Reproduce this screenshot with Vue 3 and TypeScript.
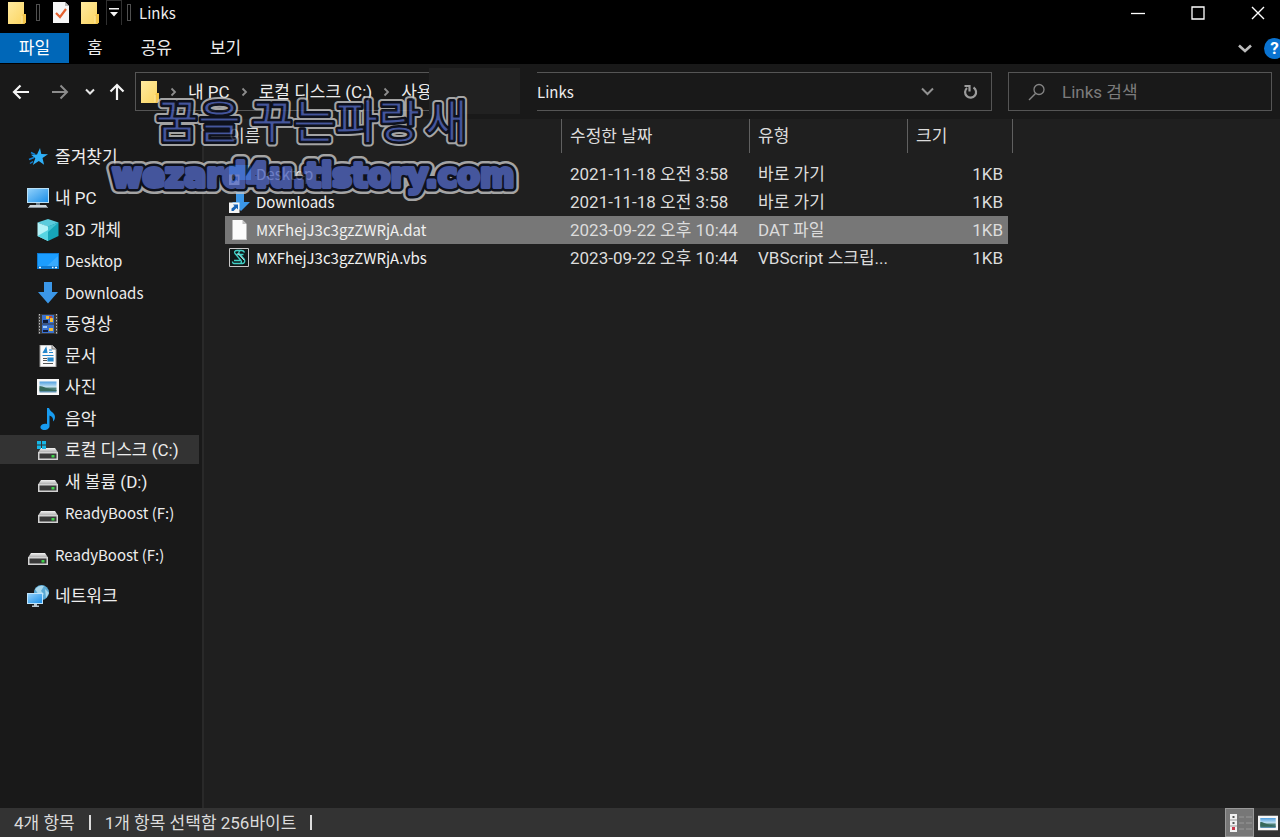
<script setup lang="ts">
import { ref } from 'vue'

interface TreeItem { id: string; icon: string; label: string }
interface FileItem { name: string; icon: string; date: string; type: string; size: string }

const tabs: string[] = ['파일', '홈', '공유', '보기']
const crumbs: string[] = ['내 PC', '로컬 디스크 (C:)', '사용']
const columns: string[] = ['이름', '수정한 날짜', '유형', '크기']

const children: TreeItem[] = [
  { id: 'objects', icon: 'cube', label: '3D 개체' },
  { id: 'desktop', icon: 'desktop', label: 'Desktop' },
  { id: 'downloads', icon: 'down', label: 'Downloads' },
  { id: 'videos', icon: 'film', label: '동영상' },
  { id: 'documents', icon: 'doc', label: '문서' },
  { id: 'pictures', icon: 'photo', label: '사진' },
  { id: 'music', icon: 'note', label: '음악' },
  { id: 'c', icon: 'sysdrive', label: '로컬 디스크 (C:)' },
  { id: 'd', icon: 'drive', label: '새 볼륨 (D:)' },
  { id: 'f', icon: 'drive', label: 'ReadyBoost (F:)' },
]

const files: FileItem[] = [
  { name: 'Desktop', icon: 'desktop-link', date: '2021-11-18 오전 3:58', type: '바로 가기', size: '1KB' },
  { name: 'Downloads', icon: 'down-link', date: '2021-11-18 오전 3:58', type: '바로 가기', size: '1KB' },
  { name: 'MXFhejJ3c3gzZWRjA.dat', icon: 'file', date: '2023-09-22 오후 10:44', type: 'DAT 파일', size: '1KB' },
  { name: 'MXFhejJ3c3gzZWRjA.vbs', icon: 'script', date: '2023-09-22 오후 10:44', type: 'VBScript 스크립...', size: '1KB' },
]

const activeFolder = ref('c')
const activeFile = ref(2)
const query = ref('')

const isLatin = (text: string): boolean => /^[\x20-\x7e]+$/.test(text)
</script>

<template>
  <div class="window">
    <svg class="defs" aria-hidden="true">
      <defs>
        <linearGradient id="gFolder" x1="0" y1="0" x2="1" y2="1">
          <stop offset="0" stop-color="#ffeaa0" /><stop offset="1" stop-color="#fbd45e" />
        </linearGradient>
        <linearGradient id="gScreen" x1="0" y1="0" x2="1" y2="1">
          <stop offset="0" stop-color="#8fd0fb" /><stop offset="1" stop-color="#1c8fe8" />
        </linearGradient>
        <linearGradient id="gPhoto" x1="0" y1="0" x2="0" y2="1">
          <stop offset="0" stop-color="#4f9fe0" /><stop offset="0.5" stop-color="#c4e2f2" /><stop offset="0.6" stop-color="#4c7f74" /><stop offset="1" stop-color="#5e93b8" />
        </linearGradient>
        <linearGradient id="gDrive" x1="0" y1="0" x2="0" y2="1">
          <stop offset="0" stop-color="#f3f3f3" /><stop offset="1" stop-color="#a9a9a9" />
        </linearGradient>
      </defs>
      <symbol id="folder" viewBox="0 0 18 22">
        <path d="M0 0h16v12l2 1v7.500l-2 1.500H0z" fill="url(#gFolder)" />
        <path d="M13.500 22v-8.500l2-1.500H18v8.500L16 22z" fill="#f3c64c" />
        <path d="M14 21.500v-8" stroke="#fff0b5" stroke-width="1" />
      </symbol>
      <symbol id="star" viewBox="0 0 22 22">
        <path d="M13 2l1.300 6 6.700.3-5.500 3.700 1.600 6.800-5.300-3.900-6 4.100 2.500-6.800L4 8.800l6-.3z" fill="#2fb0f8" />
        <path d="M2 13.500l5-2M3 17.500l3-2M4 6.500l4 2" stroke="#1180d4" stroke-width="1.500" />
      </symbol>
      <symbol id="pc" viewBox="0 0 22 22">
        <path d="M0 1h22v15H0z" fill="#b9e0f7" /><path d="M1 2h20v13H1z" fill="url(#gScreen)" />
        <path d="M9 16h4v2H9z" fill="#6d7f8c" /><path d="M3 18h16l2 3H1z" fill="#cdd5da" /><path d="M1 20h20v1H1z" fill="#87919a" />
      </symbol>
      <symbol id="cube" viewBox="0 0 22 22">
        <path d="M11 0l10.500 3.500L11 8 0.500 3.500z" fill="#5bcbdc" /><path d="M.5 3.500L11 7.500V22L.5 17z" fill="#b3f2f7" />
        <path d="M21.500 3.500L11 7.500V22l10.500-5z" fill="#16a5b9" /><path d="M.5 17L11 11l0 11z" fill="#57d4e2" /><path d="M21.500 3.500L11 13V7.500z" fill="#43c2d2" />
      </symbol>
      <symbol id="desktop" viewBox="0 0 22 22">
        <path d="M0 3h22v16H0z" fill="#0f7ad1" /><path d="M1 4h20v12H1z" fill="#1b9dff" /><path d="M10 16L21 6v10z" fill="#38aaff" />
        <path d="M2 17.500h2M15 17.500h1.500M18 17.500h2" stroke="#e8f6ff" stroke-width="1.500" />
      </symbol>
      <symbol id="down" viewBox="0 0 22 22"><path d="M7 0h8v10h6L11 21.500 1 10h6z" fill="#3b97e8" /></symbol>
      <symbol id="film" viewBox="0 0 22 22">
        <path d="M1 1h20v20H1z" fill="#3a3a3a" /><path d="M2.500 1v20M19.500 1v20" stroke="#bdbdbd" stroke-width="1" stroke-dasharray="1.5 1.500" />
        <path d="M5 2h12v8.500H5zM5 11.500h12V20H5z" fill="#3a72cf" /><path d="M9 3h3v3H9zM13 5h3v4h-3zM12 15h4v3h-4z" fill="#f0bd35" />
        <path d="M6 7h5v3H6zM6 17h5v2H6z" fill="#101b38" /><path d="M6 13h4v2H6z" fill="#9ec9f7" /><path d="M12 3h3v2h-3z" fill="#c84a38" />
      </symbol>
      <symbol id="doc" viewBox="0 0 22 22">
        <path d="M3 0h12l4 4v18H3z" fill="#fafafa" stroke="#9b9b9b" stroke-width="1" /><path d="M15 0v4h4" fill="#cfcfcf" stroke="#777" />
        <path d="M6 8l3-5 1 5M12 5h3M12 7.500h4M5.500 10.500h11M11 13h5v3h-5z" stroke="#2387cd" fill="#2387cd" stroke-width="1.200" />
        <path d="M6 13.500h4M6 15.500h4M6 18.500h10" stroke="#555" stroke-width="1" />
      </symbol>
      <symbol id="photo" viewBox="0 0 22 22">
        <path d="M0 3h22v16H0z" fill="#f7f7f7" /><path d="M2.500 5.500h17v11h-17z" fill="url(#gPhoto)" /><path d="M2.500 10c4 0 6 3 17 4v1h-17z" fill="#36695b" />
      </symbol>
      <symbol id="note" viewBox="0 0 22 22">
        <path d="M10 0h2c1 4 6 4.500 6 9 0 2-1 3.500-2 4.500.5-3.500-1-5-3.500-6V18c0 2.500-2.500 4-5 4S3 20.500 3.500 18.500 7 15 10 16z" fill="#189cf1" />
      </symbol>
      <symbol id="drive" viewBox="0 0 22 22">
        <path d="M4 9h14l3 4.500H1z" fill="url(#gDrive)" /><path d="M1 13h20v8H1z" fill="#d2d2d2" /><path d="M2.500 14.500h17v5h-17z" fill="#393939" /><path d="M14.500 16h3v2.500h-3z" fill="#3fd14a" />
      </symbol>
      <symbol id="sysdrive" viewBox="0 0 22 22">
        <use href="#drive" /><path d="M0 2h4v3.500H0zM5 2h4v3.500H5zM0 6.500h4V10H0zM5 6.500h4V10H5z" fill="#16b6e6" />
      </symbol>
      <symbol id="network" viewBox="0 0 22 22">
        <circle cx="14.500" cy="7.500" r="7.500" fill="#5aa9d4" /><path d="M8 4c3-3 6-4 9-3l-3 5 3 3-4 3zM18 4l4 4-3 5z" fill="#a9d8ec" />
        <path d="M0 8h16v11H0z" fill="#bfe4fb" /><path d="M1 9h14v9H1z" fill="url(#gScreen)" /><path d="M7 19h3v1.500h2V22H5v-1.500h2z" fill="#b9c8d2" />
      </symbol>
      <symbol id="badge" viewBox="0 0 22 22">
        <path d="M0 11.500h10.500V22H0z" fill="#f4f4f4" /><path d="M2.500 20v-2.500l3-2.500-1.500-1.500H9v5L7.500 17 4.500 20z" fill="#1763b5" />
      </symbol>
      <symbol id="desktop-link" viewBox="0 0 22 22"><path d="M0 2h22v15H0z" fill="#1b9dff" /><use href="#badge" /></symbol>
      <symbol id="down-link" viewBox="0 0 22 22"><path d="M7 0h8v11h6L12 20 3 11h4z" fill="#3b97e8" /><use href="#badge" /></symbol>
      <symbol id="file" viewBox="0 0 22 22">
        <path d="M3.500 1h10l4 4v16h-14z" fill="#fbfbfb" /><path d="M13.500 1v4h4z" fill="#bdbdbd" /><path d="M3.500 20.500h14" stroke="#d5d5d5" />
      </symbol>
      <symbol id="script" viewBox="0 0 22 22">
        <path d="M.5 1.500h19v18H.5z" fill="#101818" stroke="#c8c8c8" stroke-width="1" />
        <path d="M15.500 5.500c-.5-1.500-1.500-2-3-2H8C6 3.500 5 5 6 6.500l6 7c1 1.500 0 3-1.500 3H5c-1 0-1.500-1-1.500-2M11 4C9.500 5 9.500 6 10.500 7l4.500 5c1.500 2 .5 4.500-1.500 4.500h-3M7.500 7.500h7M5 13.500h7" fill="none" stroke="#41d0c6" stroke-width="1.300" />
        <path d="M8.500 6l6.500 7" stroke="#e2f8f5" stroke-width="0.800" />
      </symbol>
    </svg>

    <header class="titlebar">
      <svg class="folder"><use href="#folder" /></svg>
      <span class="grip"></span>
      <button class="plain props" aria-label="속성">
        <svg width="16" height="21" viewBox="0 0 16 21"><path d="M0 0h12l4 4v17H0z" fill="#f6f6f6" /><path d="M12 0v4h4z" fill="#bbb" /><path d="M3 11l4 4 6-8" fill="none" stroke="#e4602e" stroke-width="2.200" /></svg>
      </button>
      <button class="plain" aria-label="새 폴더"><svg class="folder"><use href="#folder" /></svg></button>
      <button class="plain customize" aria-label="빠른 실행 도구 모음 사용자 지정">
        <svg width="10" height="9" viewBox="0 0 10 9"><path d="M0 0h10v1.500H0zM1 4h8L5 8.500z" fill="#f5f5f5" /></svg>
      </button>
      <span class="grip"></span>
      <h1 class="latin">Links</h1>
      <div class="controls">
        <button class="plain" aria-label="최소화"><svg width="14" height="14" viewBox="0 0 14 14"><path d="M0 7.500h14" stroke="#fff" stroke-width="1.300" /></svg></button>
        <button class="plain" aria-label="최대화"><svg width="14" height="14" viewBox="0 0 14 14"><path d="M1 1h12v12H1z" fill="none" stroke="#fff" stroke-width="1.300" /></svg></button>
        <button class="plain" aria-label="닫기"><svg width="14" height="14" viewBox="0 0 14 14"><path d="M1 1l12 12M13 1L1 13" stroke="#fff" stroke-width="1.400" /></svg></button>
      </div>
    </header>

    <nav class="ribbon" aria-label="리본">
      <button v-for="(tab, i) in tabs" :key="tab" class="plain tab" :class="{ primary: i === 0 }">{{ tab }}</button>
      <div class="ribbon-end">
        <button class="plain" aria-label="리본 확장"><svg width="14" height="9" viewBox="0 0 14 9"><path d="M1 1.500l6 5.500 6-5.500" fill="none" stroke="#bcbcbc" stroke-width="2.600" /></svg></button>
        <button class="plain help" aria-label="도움말">?</button>
      </div>
    </nav>

    <div class="navbar">
      <div class="arrows">
        <button class="plain" aria-label="뒤로"><svg width="18" height="16" viewBox="0 0 18 16"><path d="M17 8H2M8.500 1.500L2 8l6.500 6.500" fill="none" stroke="#f4f4f4" stroke-width="2.200" /></svg></button>
        <button class="plain" aria-label="앞으로"><svg width="18" height="16" viewBox="0 0 18 16"><path d="M1 8h15M9.500 1.500L16 8l-6.500 6.500" fill="none" stroke="#8c8c8c" stroke-width="2" /></svg></button>
        <button class="plain" aria-label="최근 위치"><svg width="10" height="8" viewBox="0 0 10 8"><path d="M1 1.500l4 4 4-4" fill="none" stroke="#e6e6e6" stroke-width="2" /></svg></button>
        <button class="plain" aria-label="위로"><svg width="16" height="18" viewBox="0 0 16 18"><path d="M8 17V2M1.500 8.500L8 2l6.500 6.500" fill="none" stroke="#f4f4f4" stroke-width="2.200" /></svg></button>
      </div>
      <div class="address">
        <div class="path">
          <svg class="folder"><use href="#folder" /></svg>
          <template v-for="crumb in crumbs" :key="crumb">
            <svg class="chevron" width="7" height="10" viewBox="0 0 7 10"><path d="M1.500 1.500L5 5 1.500 8.500" fill="none" stroke="#8d8d8d" stroke-width="1.800" /></svg>
            <button class="plain crumb">{{ crumb }}</button>
          </template>
        </div>
        <div class="mask"><span></span></div>
        <button class="plain latin">Links</button>
        <div class="address-end">
          <button class="plain" aria-label="이전 위치"><svg width="13" height="9" viewBox="0 0 13 9"><path d="M1 1.500l5.500 5.500L12 1.500" fill="none" stroke="#919191" stroke-width="2" /></svg></button>
          <button class="plain" aria-label="새로 고침"><svg width="15" height="16" viewBox="0 0 15 16"><path d="M10.500 3.500a5.500 5.500 0 1 1-6.500.5M1.500 2h5v5.500" fill="none" stroke="#9c9c9c" stroke-width="2.200" /></svg></button>
        </div>
      </div>
      <label class="search">
        <svg width="18" height="18" viewBox="0 0 18 18"><circle cx="11" cy="6.500" r="5" fill="none" stroke="#858585" stroke-width="1.300" /><path d="M7.500 10.500L1 17" stroke="#858585" stroke-width="1.500" /></svg>
        <input v-model="query" type="text" placeholder="Links 검색" aria-label="Links 검색" />
      </label>
    </div>

    <div class="body">
      <nav class="tree" aria-label="탐색 창">
        <button class="plain node"><svg class="icon"><use href="#star" /></svg>즐겨찾기</button>
        <div class="group">
          <button class="plain node"><svg class="icon"><use href="#pc" /></svg>내 PC</button>
          <ul>
            <li v-for="item in children" :key="item.id">
              <button class="plain node child" :class="{ active: item.id === activeFolder, latin: isLatin(item.label) }" @click="activeFolder = item.id">
                <svg class="icon"><use :href="'#' + item.icon" /></svg>{{ item.label }}
              </button>
            </li>
          </ul>
        </div>
        <button class="plain node latin"><svg class="icon"><use href="#drive" /></svg>ReadyBoost (F:)</button>
        <button class="plain node"><svg class="icon"><use href="#network" /></svg>네트워크</button>
      </nav>

      <main class="files">
        <table>
          <colgroup><col class="c-name" /><col class="c-date" /><col class="c-type" /><col class="c-size" /></colgroup>
          <thead>
            <tr><th v-for="col in columns" :key="col" scope="col"><button class="plain">{{ col }}</button></th></tr>
          </thead>
          <tbody>
            <tr v-for="(file, i) in files" :key="file.name" :class="{ selected: i === activeFile }" @click="activeFile = i">
              <td><div class="name latin"><svg class="icon"><use :href="'#' + file.icon" /></svg>{{ file.name }}</div></td>
              <td>{{ file.date }}</td>
              <td>{{ file.type }}</td>
              <td>{{ file.size }}</td>
            </tr>
          </tbody>
        </table>
      </main>
    </div>

    <footer class="status">
      <span>4개 항목</span><i></i><span>1개 항목 선택함 256바이트</span><i></i>
      <div class="views">
        <button class="plain on" aria-label="자세히">
          <svg width="24" height="18" viewBox="0 0 24 18"><path d="M0 0h7v18H0z" fill="#f2f2f2" /><path d="M2.500 2h2v2h-2zM2.500 8h2v2h-2z" fill="#555" /><path d="M2 13h3v3H2z" fill="#c8394c" /><path d="M0 6h7M0 12h7" stroke="#999" /><path d="M9 3h5M16 3h6M9 9h5M16 9h6M9 15h5M16 15h6" stroke="#999" /></svg>
        </button>
        <button class="plain" aria-label="큰 아이콘"><svg width="20" height="22" viewBox="0 0 22 22"><use href="#photo" /></svg></button>
      </div>
    </footer>

    <svg class="watermark" width="420" height="116" viewBox="0 0 420 116" role="img" aria-label="꿈을 꾸는파랑새 wezard4u.tistory.com">
      <defs>
        <text id="wmTitle" class="wm-title" x="51" y="46">꿈을 꾸는파랑<tspan dx="5">새</tspan></text>
        <text id="wmSite" class="wm-site" x="7" y="95">wezard4u.tistory.com</text>
      </defs>
      <use href="#wmTitle" class="t-outer" /><use href="#wmTitle" class="t-inner" /><use href="#wmTitle" class="t-face" />
      <use href="#wmSite" class="s-outer" /><use href="#wmSite" class="s-inner" /><use href="#wmSite" class="s-face" />
    </svg>
  </div>
</template>

<style>
body { margin: 0; background: #1f1f1f; }
</style>

<style scoped>
.window {
  position: relative;
  display: flex;
  flex-direction: column;
  min-height: 100vh;
  overflow: hidden;
  background: #1f1f1f;
  color: #ededed;
  font: 400 17px/28px Roboto, "Noto Sans CJK KR", sans-serif;
}
.defs { position: absolute; width: 0; height: 0; }
svg { display: block; flex: none; }
.plain {
  display: flex;
  align-items: center;
  margin: 0;
  padding: 0;
  border: 0;
  background: none;
  color: inherit;
  font: inherit;
  white-space: nowrap;
}
.latin, .plain.latin { font-family: "Noto Sans CJK KR", sans-serif; font-size: 15px; }
.folder { width: 18px; height: 22px; }
.icon { width: 22px; height: 22px; }

.titlebar { display: flex; align-items: center; height: 25px; padding: 0 8px; background: #000; }
.grip { width: 2px; height: 15px; margin: 0 0 0 10px; border: 1px solid #505050; }
.props { margin: 0 12px 0 13px; }
.customize { justify-content: center; width: 16px; height: 26px; margin-left: 7px; border: 1px solid #303030; }
h1 { margin: 0 0 0 8px; font-weight: 400; line-height: 22px; }
.customize + .grip { margin-left: 5px; }
.controls { display: flex; gap: 46px; margin-left: auto; padding-right: 7px; }

.ribbon { display: flex; align-items: center; height: 30px; padding: 8px 0 1px; background: #000; }
.tab { justify-content: center; height: 30px; margin-right: 38px; }
.tab.primary { width: 69px; margin-right: 18px; background: #0067b8; color: #fff; }
.ribbon-end { display: flex; align-items: center; gap: 12px; margin-left: auto; }
.help { justify-content: center; width: 21px; height: 21px; margin-right: -5px; border-radius: 50%; background: #0a73d1; color: #fff; font-size: 17px; font-weight: 700; line-height: 20px; }

.navbar { display: flex; padding: 8px 8px 8px 12px; background: #191919; }
.arrows { display: flex; align-items: center; gap: 16px; width: 123px; }
.arrows .plain:nth-child(2) { margin-left: 5px; }
.arrows .plain:nth-child(4) { margin-left: -2px; }
.address { display: flex; flex: 1; align-items: center; height: 37px; padding-left: 5px; border: 1px solid #555; }
.path { display: flex; align-items: center; width: 288px; }
.chevron { margin: 0 11px; }
.mask { width: 108px; height: 47px; background: #191919; }
.mask span { display: block; width: 91px; height: 46px; background: #212121; }
.address-end { display: flex; gap: 29px; margin-left: auto; padding-right: 13px; }
.search { display: flex; align-items: center; gap: 16px; width: 243px; height: 37px; margin-left: 16px; padding-left: 19px; border: 1px solid #555; }
.search input { min-width: 0; padding: 0; border: 0; outline: 0; background: none; color: #ededed; font: inherit; }
.search input::placeholder { color: #7c7c7c; opacity: 1; }

.body { display: flex; flex: 1; }
.tree { width: 204px; padding-top: 23px; border-right: 2px solid #292929; background: #191919; box-sizing: border-box; }
.node { gap: 6px; width: 199px; height: 29px; padding-left: 27px; }
.node.child { padding-left: 37px; }
.node.active { background: #333; }
.group { margin: 12px 0; }
ul { display: flex; flex-direction: column; gap: 2px; margin: 3px 0 0; padding: 0; list-style: none; }
li:nth-child(even) { margin-bottom: 1px; }
.group + .node { margin-bottom: 12px; }

.files { flex: 1; padding-left: 21px; }
table { width: 788px; table-layout: fixed; border-collapse: separate; border-spacing: 0; color: #dcdcdc; }
.c-name { width: 337px; }
.c-date { width: 188px; }
.c-type { width: 158px; }
.c-size { width: 105px; }
th { padding: 0 0 7px; font-weight: 400; }
th .plain { width: 100%; height: 34px; padding-left: 8px; border-right: 1px solid #606060; }
th:first-child .plain { padding-left: 4px; }
td { height: 28px; padding: 0 0 0 8px; overflow: hidden; white-space: nowrap; }
td:first-child { padding-left: 4px; color: #f0f0f0; }
td:last-child { padding-right: 5px; border-right: 5px solid transparent; background-clip: padding-box; text-align: right; }
.name { display: flex; align-items: center; gap: 5px; }
.selected td { background-color: #777; }

.status { display: flex; align-items: center; gap: 14px; height: 29px; padding-left: 14px; background: #333; color: #dcdcdc; }
.status i { width: 2px; height: 15px; background: #dcdcdc; }
.views { display: flex; align-self: stretch; gap: 4px; margin-left: auto; }
.views .plain { width: 22px; }
.views .on { justify-content: flex-start; width: 29px; padding-left: 4px; border: 1px solid #999; background: #777; overflow: hidden; }

.watermark { position: absolute; z-index: 2; top: 92px; left: 105px; opacity: 0.8; pointer-events: none; }
.wm-title { font: 400 46px "Noto Sans CJK KR", sans-serif; }
.wm-site { font: 700 33px "DejaVu Sans", sans-serif; }
.watermark use { stroke-linejoin: round; stroke-linecap: round; }
.t-outer { fill: #c6c6c6; stroke: #c6c6c6; stroke-width: 8; }
.t-inner { fill: #0b0e1c; stroke: #0b0e1c; stroke-width: 4; }
.t-face { fill: #4f64bd; stroke: #0b0e1c; stroke-width: 1; }
.s-outer { fill: #c6c6c6; stroke: #c6c6c6; stroke-width: 14; }
.s-inner { fill: #0b0e1c; stroke: #0b0e1c; stroke-width: 9; }
.s-face { fill: #4f64bd; stroke: #4f64bd; stroke-width: 4; }
</style>
